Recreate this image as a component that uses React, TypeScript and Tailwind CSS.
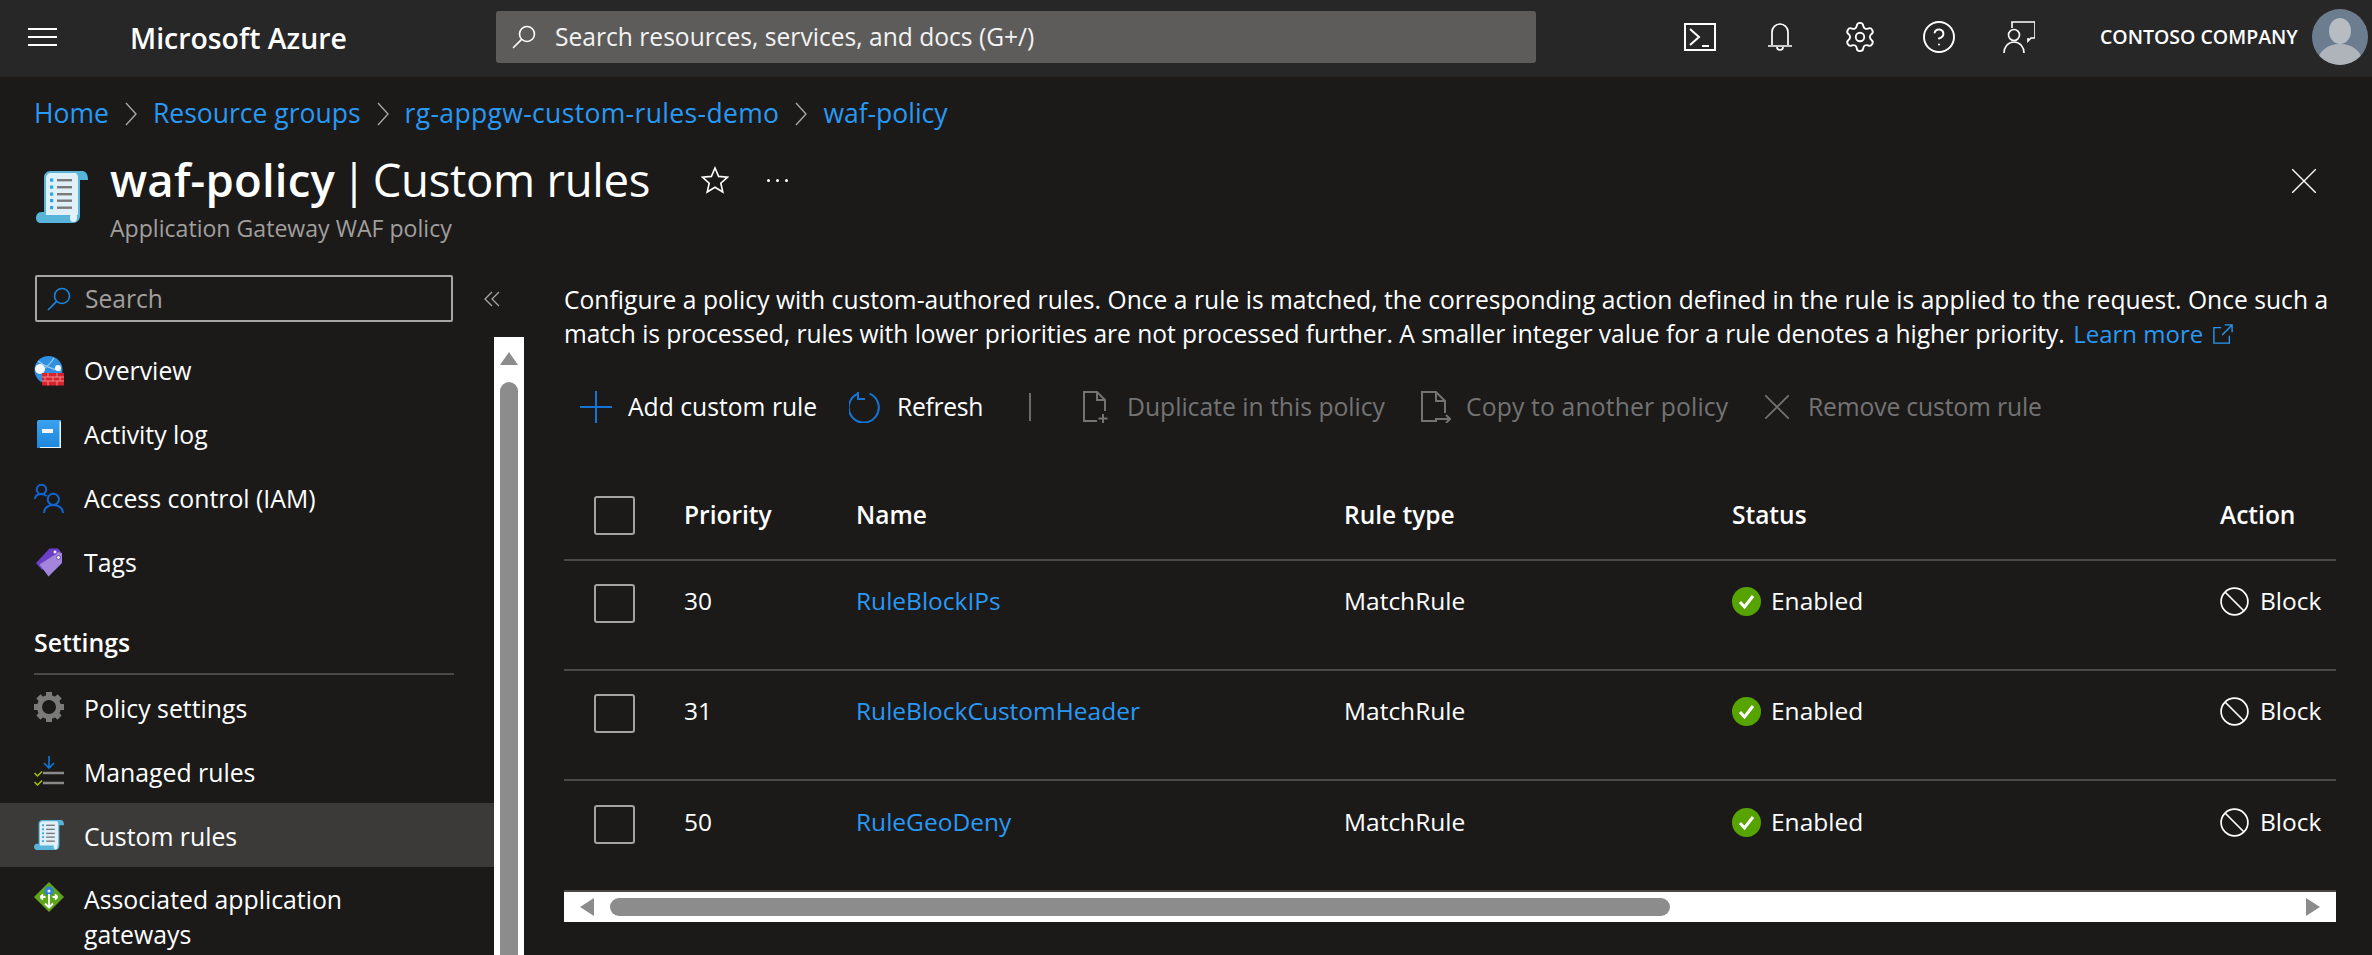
import React from "react";
import { Settings, CircleHelp } from "lucide-react";

const ScrollIcon = ({ className }: { className: string }) => (
  <svg viewBox="0 0 52 52" className={className}>
    <path d="M14 0h32c3 0 6 2 6 9h-8v36c0 4-3 7-7 7H5c-3 0-5-2-5-5s2-6 5-6h3V6c0-3 3-6 6-6z" fill="#59b4d9" />
    <path d="M15 2h25c1 1 2 2 2 5v36c0 1-1 1-2 1H10V7c0-3 2-5 5-5z" fill="#dff0f9" />
    <ellipse cx="37.5" cy="46.500" rx="3.5" ry="4.5" fill="#e4f3fb" />
    <g fill="#7a7a7a">
      <rect x="21" y="8" width="15" height="2.4" />
      <rect x="21" y="15" width="15" height="2.4" />
      <rect x="21" y="22" width="15" height="2.4" />
      <rect x="21" y="28.500" width="15" height="2.4" />
      <rect x="21" y="35.500" width="15" height="2.4" />
    </g>
    <g fill="#2ba6e0">
      <rect x="14" y="7.500" width="3.2" height="3.2" />
      <rect x="14" y="14.500" width="3.2" height="3.2" />
      <rect x="14" y="21.500" width="3.2" height="3.2" />
      <rect x="14" y="28" width="3.2" height="3.2" />
      <rect x="14" y="35" width="3.2" height="3.2" />
    </g>
  </svg>
);

const OverviewIcon = () => (
  <svg viewBox="0 0 30 30" className="w-[30px] h-[30px]">
    <circle cx="14.5" cy="14" r="14" fill="#2f8fe0" />
    <path d="M4 5c6 5 14 8 23 10M20 2c-3 5-8 10-15 14" stroke="#9ccbf0" strokeWidth="1.2" fill="none" />
    <circle cx="6" cy="13" r="5" fill="#f4f8fc" />
    <circle cx="24" cy="12" r="3" fill="#f4f8fc" />
    <rect x="8" y="17" width="22" height="12.500" fill="#d6232d" />
    <path d="M8 21h22M8 25h22M14 17v4M23 17v4M11 21v4M19 21v4M26 21v4M14 25v4.500M23 25v4.500" stroke="#f08b8f" strokeWidth="1" />
  </svg>
);

const BookIcon = () => (
  <svg viewBox="0 0 30 30" className="w-[30px] h-[30px]">
    <defs>
      <linearGradient id="bk" x1="0" y1="0" x2="0" y2="1">
        <stop offset="0" stopColor="#3aa2ee" />
        <stop offset="1" stopColor="#1e86dc" />
      </linearGradient>
    </defs>
    <path d="M5 0h22v28H3V2a2 2 0 0 1 2-2z" fill="url(#bk)" />
    <path d="M25.500 1.500H27v26.500H6v-1h19.500z" fill="#eaf4fb" />
    <rect x="8" y="9" width="11" height="4" fill="#f4f8fc" />
  </svg>
);

const IamIcon = () => (
  <svg viewBox="0 0 30 30" className="w-[30px] h-[30px]" fill="none" stroke="#0f66d4" strokeWidth="2">
    <circle cx="7.500" cy="5.500" r="4.7" />
    <path d="M0.800 15c0.500-3 3-5 6.700-5 2 0 4 0.800 5 2.200" />
    <circle cx="19.300" cy="15.300" r="5.600" />
    <path d="M10 29c0-5 4-8 9.300-8s9.700 3 9.700 8" />
  </svg>
);

const TagIcon = () => (
  <svg viewBox="0 0 30 30" className="w-[30px] h-[30px]">
    <path d="M2 15L15.500 0.500 24 0.500 27 4 8 22z" fill="#6c3fc9" />
    <path d="M5.500 16.500L22 6l2-2 4 1v10L14.500 28.500z" fill="#a385dc" />
    <circle cx="21" cy="4" r="2" fill="#f2eefb" stroke="#5b34ad" strokeWidth="0.8" />
    <circle cx="24.500" cy="9.500" r="2" fill="#f2eefb" stroke="#5b34ad" strokeWidth="0.8" />
  </svg>
);

const GearFilled = () => (
  <svg viewBox="0 0 30 30" className="w-[30px] h-[30px]" fill="none">
    <circle cx="15" cy="15" r="9.5" stroke="#7a7a7a" strokeWidth="5" />
    <g stroke="#7a7a7a" strokeWidth="6">
      <path d="M15 0v5M15 25v5M0 15h5M25 15h5M4.400 4.400l3.500 3.500M22.100 22.100l3.500 3.500M4.400 25.600l3.500-3.500M22.100 7.900l3.500-3.500" />
    </g>
  </svg>
);

const ManagedIcon = () => (
  <svg viewBox="0 0 30 30" className="w-[30px] h-[30px]" fill="none">
    <path d="M15 0v11M10 7l5 5 5-5" stroke="#0f78d4" strokeWidth="1.6" />
    <path d="M9 17h21M9 27h21" stroke="#8a8a8a" strokeWidth="2.4" />
    <path d="M0.500 17l3 3 4.500-4.500M0.500 26l3 3 4.500-4.500" stroke="#a4c400" strokeWidth="1.5" />
  </svg>
);

const AssocIcon = () => (
  <svg viewBox="0 0 30 30" className="w-[30px] h-[30px]">
    <path d="M15 0l15 15-15 15L0 15z" fill="#5ea51b" />
    <circle cx="15" cy="9" r="4.5" fill="#2f7fd6" />
    <circle cx="15" cy="9" r="1.600" fill="#e6f1fb" />
    <path d="M15 12v13M11 21.500l4 4 4-4M6.500 15h5M6.500 15l2.500-2.500M6.500 15l2.500 2.500M23.500 15h-5M23.500 15L21 12.500M23.500 15L21 17.500" stroke="#fff" strokeWidth="1.8" fill="none" />
  </svg>
);

const SearchGlass = ({ color, size }: { color: string; size: string }) => (
  <svg viewBox="0 0 24 24" className={size} fill="none" stroke={color} strokeWidth="1.6">
    <circle cx="15" cy="9" r="7.5" />
    <path d="M9.600 14.400L1 23" />
  </svg>
);

const Chevron = () => (
  <svg viewBox="0 0 12 24" className="w-[12px] h-[24px] mx-[16px]" fill="none" stroke="#a6a6a6" strokeWidth="1.4">
    <path d="M1 1l10 11L1 23" />
  </svg>
);

const EnabledIcon = () => (
  <svg viewBox="0 0 29 29" className="w-[29px] h-[29px] shrink-0">
    <circle cx="14.5" cy="14.5" r="14.5" fill="#57a300" />
    <path d="M8 15l4.500 5L21 9" fill="none" stroke="#fff" strokeWidth="3" />
  </svg>
);

const BlockIcon = () => (
  <svg viewBox="0 0 29 29" className="w-[29px] h-[29px] shrink-0" fill="none" stroke="#fff" strokeWidth="1.7">
    <circle cx="14.5" cy="14.5" r="13.400" />
    <path d="M5 5l19 19" />
  </svg>
);

const Box = () => <div className="w-[41px] h-[39px] rounded-[3px] border-2 border-[#a3a3a3]" />;

const NavRow = ({ icon, label, active, low }: { icon: React.ReactNode; label: string; active?: boolean; low?: boolean }) => (
  <div className={`h-[64px] flex items-center pl-[34px] ${active ? "bg-[#3b3a39]" : ""}`}>
    <span className="w-[30px] h-[30px] shrink-0">{icon}</span>
    <span className={`ml-[20px] text-[24.8px] text-white ${low ? "pt-[3px]" : ""}`}>{label}</span>
  </div>
);

const Tool = ({ icon, label, disabled, className, textClass }: { icon: React.ReactNode; label: string; disabled?: boolean; className: string; textClass?: string }) => (
  <div className={`flex items-center ${className}`}>
    {icon}
    <span className={`text-[24.7px] whitespace-nowrap ${disabled ? "text-[#737373]" : "text-white"} ${textClass ?? ""}`}>{label}</span>
  </div>
);

const rows = [
  { p: "30", n: "RuleBlockIPs" },
  { p: "31", n: "RuleBlockCustomHeader" },
  { p: "50", n: "RuleGeoDeny" },
];
const grid = "grid grid-cols-[120px_172px_488px_388px_488px_116px] items-center";

export default function App() {
  return (
    <div className="w-[2372px] h-[955px] overflow-hidden bg-[#1b1a19] text-white font-['Open_Sans','Noto_Sans',sans-serif] flex flex-col">
      <header className="h-[77px] bg-[#272727] flex items-center pb-[3px] shrink-0">
        <svg viewBox="0 0 29 18" className="w-[29px] h-[18px] ml-[28px]" stroke="#fff" strokeWidth="2">
          <path d="M0 1h29M0 9h29M0 17h29" />
        </svg>
        <span className="ml-[73px] w-[366px] pt-[3px] text-[28.4px] font-semibold leading-none">Microsoft Azure</span>
        <div className="w-[1040px] h-[52px] rounded-[3px] bg-[#5d5c5a] flex items-center pl-[16px]">
          <SearchGlass color="#fff" size="w-[24px] h-[24px]" />
          <span className="ml-[19px] text-[24.6px] leading-none text-[#f3f3f3]">Search resources, services, and docs (G+/)</span>
        </div>
        <div className="ml-[148px] flex items-center">
          <svg viewBox="0 0 32 28" className="w-[32px] h-[28px]" fill="none" stroke="#fff" strokeWidth="2">
            <rect x="1" y="1" width="30" height="26" />
            <path d="M6 6l9 8-9 8M18 23h7" />
          </svg>
          <svg viewBox="0 0 24 30" className="w-[24px] h-[30px] ml-[52px]" fill="none" stroke="#fff" strokeWidth="1.7">
            <path d="M4 23V10a8 8 0 0 1 16 0v13M0 24h24M9 25a3 3 0 0 0 6 0" />
          </svg>
          <Settings className="w-[34px] h-[34px] ml-[51px]" strokeWidth={1.3} />
          <CircleHelp className="w-[36px] h-[36px] ml-[44px]" strokeWidth={1.3} />
          <svg viewBox="0 0 32 32" className="w-[32px] h-[32px] ml-[46px]" fill="none" stroke="#fff" strokeWidth="1.6">
            <path d="M9 7V1h23v16h-4l-3 3v-3" />
            <circle cx="11" cy="14" r="5.5" />
            <path d="M1 32c0-6 4-11 10-11s10 5 10 11" />
          </svg>
        </div>
        <span className="ml-[65px] text-[19.5px] leading-none font-semibold whitespace-nowrap">CONTOSO COMPANY</span>
        <svg viewBox="0 0 56 56" className="w-[56px] h-[56px] ml-[14px] shrink-0">
          <defs>
            <clipPath id="av"><circle cx="28" cy="28" r="28" /></clipPath>
          </defs>
          <g clipPath="url(#av)">
            <rect width="56" height="56" fill="#6d7d90" />
            <ellipse cx="28" cy="22" rx="11" ry="13" fill="#b6bcc2" />
            <ellipse cx="28" cy="52" rx="22" ry="17" fill="#aeb4ba" />
          </g>
        </svg>
      </header>

      <nav className="h-[72px] flex items-center pl-[34px] pt-[1px] text-[26.5px] text-[#2899f5] shrink-0 whitespace-nowrap">
        <span>Home</span>
        <Chevron />
        <span>Resource groups</span>
        <Chevron />
        <span className="tracking-[0.35px]">rg-appgw-custom-rules-demo</span>
        <Chevron />
        <span>waf-policy</span>
      </nav>

      <div className="h-[126px] flex items-start shrink-0 relative">
        <ScrollIcon className="w-[52px] h-[52px] ml-[36px] mt-[22px] shrink-0" />
        <div className="ml-[22px] flex flex-col">
          <div className="flex items-center h-[62px]">
            <h1 className="text-[45.5px] leading-none whitespace-nowrap tracking-[-0.3px]">
              <span className="font-semibold tracking-[0.2px]">waf-policy</span>
              <span className="font-normal [word-spacing:-5px]"> | </span>
              <span className="font-normal">Custom rules</span>
            </h1>
            <svg viewBox="0 0 28 28" className="w-[28px] h-[28px] ml-[51px]" fill="none" stroke="#fff" strokeWidth="1.6">
              <path d="M14 2l3.600 8.400 9 .8-6.800 6 2 8.800L14 21.200 6.200 26l2-8.800-6.800-6 9-.8z" />
            </svg>
            <div className="ml-[38px] flex gap-[6px]">
              <span className="w-[3px] h-[3px] rounded-full bg-white" />
              <span className="w-[3px] h-[3px] rounded-full bg-white" />
              <span className="w-[3px] h-[3px] rounded-full bg-white" />
            </div>
          </div>
          <div className="text-[23.1px] leading-none mt-[6px] text-[#a19f9d]">Application Gateway WAF policy</div>
        </div>
        <svg viewBox="0 0 24 24" className="absolute right-[56px] top-[20px] w-[24px] h-[24px]" fill="none" stroke="#fff" strokeWidth="1.4">
          <path d="M0 0l24 24M24 0L0 24" />
        </svg>
      </div>

      <div className="flex flex-1 min-h-0">
        <aside className="w-[524px] shrink-0 flex flex-col">
          <div className="flex items-center h-[47px] shrink-0">
            <div className="ml-[35px] w-[418px] h-[47px] border-2 border-[#a6a6a6] rounded-[2px] flex items-center pl-[10px]">
              <SearchGlass color="#1a86e0" size="w-[24px] h-[24px]" />
              <span className="ml-[14px] pt-[2px] text-[24.6px] text-[#a19f9d]">Search</span>
            </div>
            <svg viewBox="0 0 16 16" className="w-[16px] h-[16px] ml-[31px]" fill="none" stroke="#a6a6a6" strokeWidth="1.3">
              <path d="M8 1L1 8l7 7M15 1L8 8l7 7" />
            </svg>
          </div>
          <div className="flex flex-1 min-h-0 mt-[15px]">
            <div className="w-[494px] pt-[2px]">
              <NavRow icon={<OverviewIcon />} label="Overview" />
              <NavRow icon={<BookIcon />} label="Activity log" />
              <NavRow icon={<IamIcon />} label="Access control (IAM)" />
              <NavRow icon={<TagIcon />} label="Tags" />
              <div className="mx-[34px] w-[420px] h-[80px] border-b-2 border-[#4a4948] pt-[28px] text-[24.8px] leading-[38px] font-semibold">Settings</div>
              <NavRow icon={<GearFilled />} label="Policy settings" low />
              <NavRow icon={<ManagedIcon />} label="Managed rules" low />
              <NavRow icon={<ScrollIcon className="w-[30px] h-[30px]" />} label="Custom rules" active low />
              <div className="flex pl-[34px] pt-[15px]">
                <span className="w-[30px] h-[30px] shrink-0"><AssocIcon /></span>
                <span className="ml-[20px] text-[24.8px] leading-[35px] w-[340px]">Associated application gateways</span>
              </div>
            </div>
            <div className="w-[30px] bg-white flex flex-col items-center pt-[15px]">
              <div className="w-0 h-0 border-x-[9px] border-x-transparent border-b-[13px] border-b-[#8c8c8c]" />
              <div className="w-[18px] flex-1 mt-[17px] rounded-t-[9px] bg-[#8c8c8c]" />
            </div>
          </div>
        </aside>

        <main className="ml-[40px] w-[1772px] flex flex-col">
          <p className="pt-[8px] text-[24.6px] leading-[34px] whitespace-nowrap h-[76px]">
            <span className="tracking-[0.03px]">
              Configure a policy with custom-authored rules. Once a rule is matched, the corresponding action defined in the rule is applied to the request. Once such a
            </span>
            <br />
            <span className="tracking-[-0.045px]">
              match is processed, rules with lower priorities are not processed further. A smaller integer value for a rule denotes a higher priority.
            </span>{" "}
            <span className="text-[#2899f5] ml-[2px] text-[24px]">Learn more</span>
            <svg viewBox="0 0 22 22" className="inline w-[20px] h-[20px] ml-[10px] align-[-1px]" fill="none" stroke="#2899f5" strokeWidth="1.5">
              <path d="M9 4H1v17h17v-8M13 1h8v8M21 1L10 12" />
            </svg>
          </p>

          <div className="h-[56px] mt-[28px] flex items-center shrink-0">
            <Tool
              className="ml-[16px] w-[269px]"
              label="Add custom rule"
              icon={
                <svg viewBox="0 0 32 32" className="w-[32px] h-[32px] mr-[16px]" stroke="#1574d8" strokeWidth="2">
                  <path d="M16 0v32M0 16h32" />
                </svg>
              }
            />
            <Tool
              className="w-[180px]"
              label="Refresh"
              textClass="tracking-[-0.3px]"
              icon={
                <svg viewBox="0 0 32 32" className="w-[32px] h-[32px] mr-[16px]" fill="none" stroke="#1574d8" strokeWidth="2">
                  <path d="M20.500 2.700A15 15 0 1 1 9.500 2.500M9 1v7h7" />
                </svg>
              }
            />
            <div className="w-[2px] h-[28px] bg-[#6b6b6b] mr-[52px]" />
            <Tool
              className="w-[338px]"
              disabled
              label="Duplicate in this policy"
              icon={
                <svg viewBox="0 0 26 32" className="w-[26px] h-[32px] mr-[18px]" fill="none" stroke="#737373" strokeWidth="2">
                  <path d="M14 30H1V1h13l8 8v11M14 1v8h8M20 23v9M15.500 27.500h9" />
                </svg>
              }
            />
            <Tool
              className="w-[344px]"
              disabled
              label="Copy to another policy"
              textClass="tracking-[0.15px]"
              icon={
                <svg viewBox="0 0 30 32" className="w-[30px] h-[32px] mr-[15px]" fill="none" stroke="#737373" strokeWidth="2">
                  <path d="M16 30H1V1h14l9 9v12M15 1v9h9M14 28h15M25 24l4 4-4 4" />
                </svg>
              }
            />
            <Tool
              disabled
              className=""
              label="Remove custom rule"
              textClass="tracking-[-0.15px]"
              icon={
                <svg viewBox="0 0 24 24" className="w-[24px] h-[24px] mr-[19px]" fill="none" stroke="#737373" strokeWidth="1.6">
                  <path d="M0 0l24 24M24 0L0 24" />
                </svg>
              }
            />
          </div>

          <div className={`${grid} h-[87px] mt-[39px] pb-[2px] border-b-2 border-[#4a4948] text-[24.5px] font-semibold shrink-0`}>
            <div className="pl-[30px]"><Box /></div>
            <div>Priority</div>
            <div>Name</div>
            <div>Rule type</div>
            <div>Status</div>
            <div>Action</div>
          </div>
          {rows.map((r, i) => (
            <div key={r.p} className={`${grid} h-[110px] pb-[27px] text-[24.5px] shrink-0 ${i < 2 ? "border-b-2 border-[#4a4948]" : ""}`}>
              <div className="pl-[30px] pt-[3px]"><Box /></div>
              <div>{r.p}</div>
              <div className="text-[#2899f5] whitespace-nowrap">{r.n}</div>
              <div>MatchRule</div>
              <div className="flex items-center gap-[10px]"><EnabledIcon />Enabled</div>
              <div className="flex items-center gap-[11px]"><BlockIcon />Block</div>
            </div>
          ))}
          <div className="h-[32px] border-t-2 border-[#4a4948] bg-white flex items-center pl-[16px] pr-[16px] shrink-0 -mt-[1px]">
            <div className="w-0 h-0 border-y-[9px] border-y-transparent border-r-[14px] border-r-[#8c8c8c]" />
            <div className="w-[1060px] h-[18px] rounded-[9px] bg-[#8c8c8c] ml-[16px]" />
            <div className="ml-auto w-0 h-0 border-y-[9px] border-y-transparent border-l-[14px] border-l-[#8c8c8c]" />
          </div>
        </main>
      </div>
    </div>
  );
}
